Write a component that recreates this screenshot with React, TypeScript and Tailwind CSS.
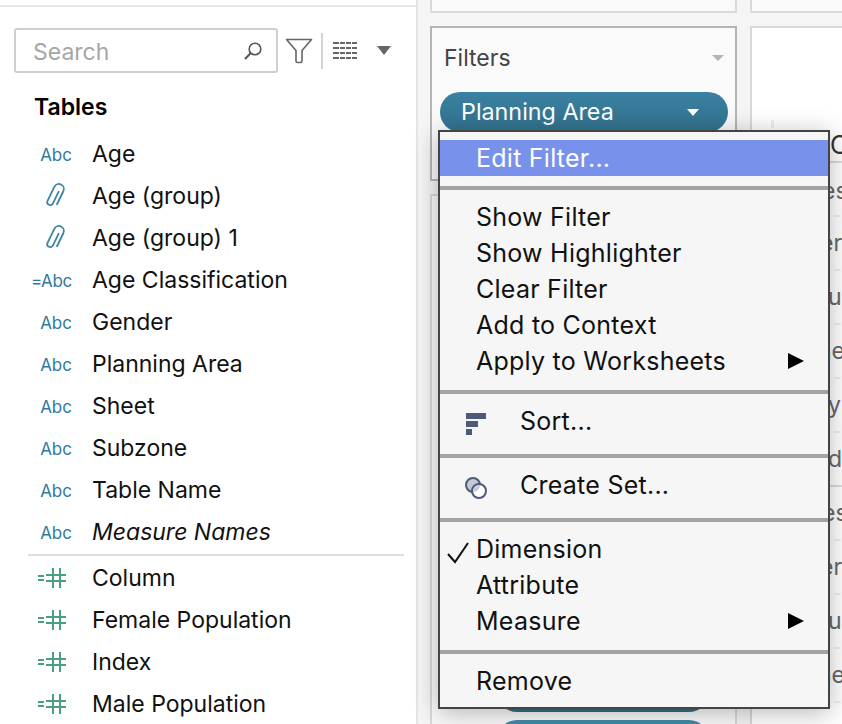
const font = "font-['Inter','Liberation_Sans',sans-serif]";

const dims: [string, string][] = [
  ["abc", "Age"],
  ["clip", "Age (group)"],
  ["clip", "Age (group) 1"],
  ["calc", "Age Classification"],
  ["abc", "Gender"],
  ["abc", "Planning Area"],
  ["abc", "Sheet"],
  ["abc", "Subzone"],
  ["abc", "Table Name"],
  ["abc", "Measure Names"],
];
const measures = ["Column", "Female Population", "Index", "Male Population"];
const rightRows: [string, string][] = [
  ["es", "pl-[70px] pt-[4px]"],
  ["er", "pl-[68px]"],
  ["u", "pl-[76px]"],
  ["ne", "pl-[66px]"],
  ["y", "pl-[76px]"],
  ["dr", "pl-[76px]"],
  ["es", "pl-[70px]"],
  ["er", "pl-[68px]"],
  ["u", "pl-[76px]"],
  ["ne", "pl-[66px]"],
];

function Clip() {
  return (
    <svg width="24" height="28" viewBox="0 0 24 28" fill="none" stroke="#3f84a6" strokeWidth="1.8" strokeLinecap="round" className="mr-[4px]">
      <g transform="rotate(26 12 14)">
        <path d="M12.5 9V22a3 3 0 0 1-6 0V6.5a5 5 0 0 1 10 0V21" />
      </g>
    </svg>
  );
}

function Hash() {
  return (
    <svg width="28" height="20" viewBox="0 0 28 20" fill="#4a9f80" className="mr-[6px]">
      <rect x="0" y="7" width="6" height="2" />
      <rect x="0" y="11" width="6" height="2" />
      <rect x="8" y="6" width="20" height="2" />
      <rect x="8" y="12" width="20" height="2" />
      <rect x="14" y="0" width="2" height="20" />
      <rect x="21" y="0" width="2" height="20" />
    </svg>
  );
}

function Row({ kind, label }: { kind: string; label: string }) {
  return (
    <div className="flex h-[42px] items-center">
      <div className="flex w-[72px] shrink-0 justify-end">
        {kind === "abc" && <span className="pt-[3px] text-[17px] leading-none text-[#2f7a9e]">Abc</span>}
        {kind === "calc" && <span className="pt-[3px] text-[17px] leading-none tracking-[-0.3px] text-[#2f7a9e]">=Abc</span>}
        {kind === "clip" && <Clip />}
        {kind === "hash" && <Hash />}
      </div>
      <span className={"ml-[20px] text-[23px] text-[#111] " + (label === "Measure Names" ? "italic" : "")}>{label}</span>
    </div>
  );
}

function Sep() {
  return <div className="h-[4px] bg-[#a3a3a3]" />;
}

function Item({ label, arrow }: { label: string; arrow?: boolean }) {
  return (
    <div className="flex h-[36px] items-center justify-between pl-[36px] pr-[24px]">
      <span className="pt-[2px]">{label}</span>
      {arrow && <div className="h-0 w-0 border-y-[8px] border-l-[16px] border-y-transparent border-l-black" />}
    </div>
  );
}

export default function App() {
  return (
    <div className={"relative flex h-[724px] w-[842px] overflow-hidden bg-[#f5f5f5] " + font}>
      {/* data pane */}
      <div className="w-[416px] shrink-0 bg-white">
        <div className="mt-[5px] h-[2px] bg-[#e6e6e6]" />
        <div className="flex h-[45px] mt-[21px] items-center pl-[14px]">
          <div className="flex h-[45px] w-[264px] items-center justify-between rounded-[3px] border-2 border-[#cfcfcf] pl-[17px] pr-[13px]">
            <span className="pt-[3px] text-[23px] text-[#a6a6a6]">Search</span>
            <svg width="20" height="20" viewBox="0 0 20 20" fill="none" stroke="#555" strokeWidth="1.6">
              <circle cx="12" cy="8" r="5.8" />
              <path d="M7.6 12.2 2 18" strokeWidth="2" />
            </svg>
          </div>
          <svg width="28" height="26" viewBox="0 0 28 26" fill="none" stroke="#666" strokeWidth="1.6" strokeLinejoin="round" className="ml-[7px]">
            <path d="M1.5 1.5h25L17 12.5V23a1.5 1.5 0 0 1-1.5 1.5h-3A1.5 1.5 0 0 1 11 23V12.5z" />
          </svg>
          <div className="ml-[8px] h-[36px] w-[2px] bg-[#d4d4d4]" />
          <svg width="24" height="18" viewBox="0 0 24 18" fill="#666" className="ml-[10px]">
            <path d="M0 0h24v2H0zM0 5h24v2H0zM0 10h24v2H0zM0 15h24v2H0z" />
            <path d="M6 0h1v18H6zM12 0h1v18h-1zM18 0h1v18h-1z" fill="#fff" />
          </svg>
          <div className="ml-[20px] h-0 w-0 border-x-[7.5px] border-t-[9px] border-x-transparent border-t-[#666]" />
        </div>
        <div className="mt-[13px] mb-[5px] flex h-[42px] items-center pl-[34px] text-[23px] font-semibold text-black">Tables</div>
        {dims.map(([kind, label]) => (
          <Row key={label} kind={kind} label={label} />
        ))}
        <div className="mt-[1px] mb-[1px] ml-[28px] h-[2px] w-[376px] bg-[#dedede]" />
        {measures.map((label) => (
          <Row key={label} kind="hash" label={label} />
        ))}
      </div>
      <div className="h-full w-[2px] shrink-0 bg-[#e4e4e4]" />

      {/* shelves */}
      <div className="ml-[12px] flex h-full w-[307px] shrink-0 flex-col">
        <div className="h-[13px] shrink-0 border-x-2 border-b-2 border-[#d9d9d9] bg-[#fafafa]" />
        <div className="mt-[13px] h-[155px] shrink-0 border-2 border-[#b5b5b5] bg-[#fafafa] pl-[8px] pr-[7px]">
          <div className="flex h-[60px] items-center justify-between pl-[4px] pr-[4px]">
            <span className="text-[23px] text-[#444]">Filters</span>
            <div className="h-0 w-0 border-x-[6.5px] border-t-[6px] border-x-transparent border-t-[#b5b5b5]" />
          </div>
          <div className="mt-[4px] flex h-[40px] items-center justify-between rounded-full bg-gradient-to-b from-[#3a80a0] to-[#33728f] pl-[21px] pr-[29px] text-[23.3px] text-white">
            <span>Planning Area</span>
            <div className="h-0 w-0 border-x-[6px] border-t-[7px] border-x-transparent border-t-white" />
          </div>
        </div>
        <div className="mt-[13px] min-h-0 flex-1 overflow-hidden border-2 border-b-0 border-[#d9d9d9] bg-[#fafafa] pl-[65px] pr-[26px] pt-[476px]">
          <div className="h-[40px] rounded-full bg-[#2f6f8c]" />
          <div className="mt-[8px] h-[40px] rounded-full bg-[#428ca9]" />
        </div>
      </div>

      {/* view */}
      <div className="ml-[13px] flex h-full flex-1 flex-col">
        <div className="h-[13px] shrink-0 border-b-2 border-l-2 border-[#d9d9d9] bg-[#fafafa]" />
        <div className="mt-[13px] flex-1 border-l-2 border-t-2 border-[#d9d9d9] bg-white">
          <div className="ml-[19px] mt-[92px] h-[8px] w-[3px] bg-[#eeeeee]" />
          <div className="flex h-[35px] items-center border-b-2 border-[#dddddd] pl-[78px] pt-[3px] text-[25px] text-[#333]">C</div>
          {rightRows.map(([t, pad], i) => (
            <div key={i} className={"flex h-[54px] items-center text-[23px] text-[#666] " + pad + " " + (i === 5 ? "border-b-2 border-[#dddddd]" : "border-b-2 border-dashed border-[#eeeeee]")}>
              {t}
            </div>
          ))}
        </div>
      </div>

      {/* context menu */}
      <div className="absolute left-[438px] top-[130px] w-[392px] border-2 border-[#444] bg-[#f6f6f6] text-[25px] tracking-[0.25px] text-[#111] shadow-[0_4px_24px_rgba(0,0,0,0.28)]">
        <div className="pt-[8px] pb-[10px]">
          <div className="flex h-[36px] items-center bg-[#7891ea] pl-[36px] text-white">
            <span className="pt-[2px]">Edit Filter...</span>
          </div>
        </div>
        <Sep />
        <div className="pt-[9px] pb-[11px]">
          <Item label="Show Filter" />
          <Item label="Show Highlighter" />
          <Item label="Clear Filter" />
          <Item label="Add to Context" />
          <Item label="Apply to Worksheets" arrow />
        </div>
        <Sep />
        <div className="flex h-[60px] items-center pl-[26px]">
          <svg width="20" height="22" viewBox="0 0 20 22" fill="#4a5a78" className="mr-[34px]">
            <rect x="0" y="0" width="20" height="6" />
            <rect x="0" y="8" width="12" height="6" />
            <rect x="0" y="16" width="6" height="6" />
          </svg>
          <span className="pb-[4px]">Sort...</span>
        </div>
        <Sep />
        <div className="flex h-[60px] items-center pl-[24px]">
          <svg width="24" height="24" viewBox="0 0 24 24" className="mr-[32px]">
            <circle cx="9" cy="9" r="7" fill="#c3c9d6" stroke="#4a5a78" strokeWidth="2" />
            <circle cx="15" cy="15" r="7" fill="#fff" stroke="#4a5a78" strokeWidth="2" />
            <path d="M9 16a7 7 0 0 1 7-7 7 7 0 0 1-7 7z" fill="#c3c9d6" />
          </svg>
          <span className="pb-[4px]">Create Set...</span>
        </div>
        <Sep />
        <div className="relative pt-[9px] pb-[11px]">
          <svg width="22" height="22" viewBox="0 0 22 22" fill="none" stroke="#111" strokeWidth="2" className="absolute left-[7px] top-[20px]">
            <path d="M1 12 8 20 21 1" />
          </svg>
          <Item label="Dimension" />
          <Item label="Attribute" />
          <Item label="Measure" arrow />
        </div>
        <Sep />
        <div className="pt-[9px] pb-[8px]">
          <Item label="Remove" />
        </div>
      </div>
    </div>
  );
}
